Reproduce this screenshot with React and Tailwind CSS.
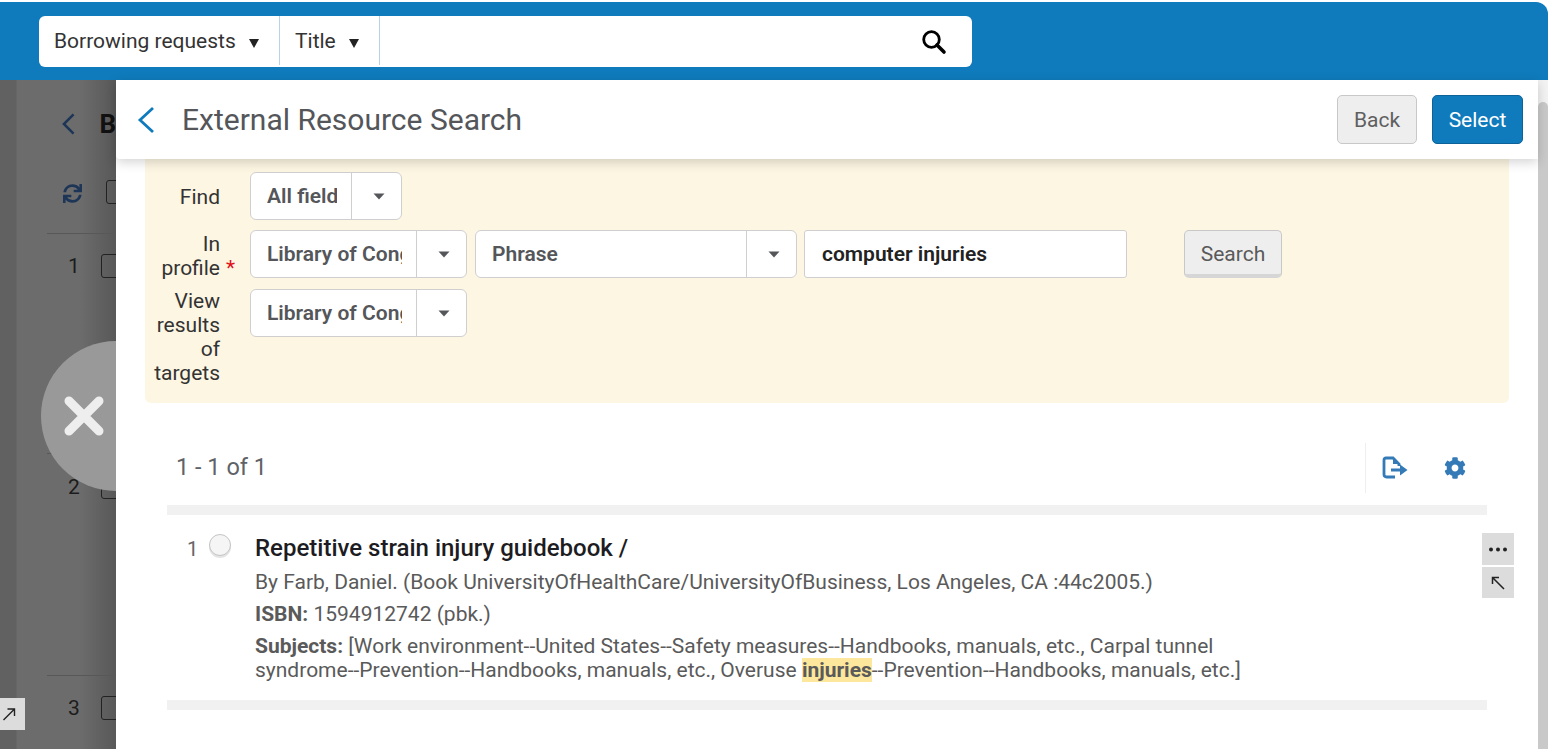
import React from 'react'
import { FaSync, FaCog } from 'react-icons/fa'

function Caret({ className }) {
    return (
        <svg width="12" height="7" viewBox="0 0 12 7" className={className}>
            <path d="M0.5 0.5 H11.5 L6 6.5 Z" fill="currentColor" />
        </svg>
    )
}

function SmallCaret() {
    return (
        <svg width="10" height="9" viewBox="0 0 10 9" className="mt-[3px] shrink-0 text-[#222222]">
            <path d="M0 0 H10 L5 9 Z" fill="currentColor" />
        </svg>
    )
}

function Dropdown({ label, width, textWidth }) {
    return (
        <div className={`flex h-[48px] rounded-[6px] border border-[#cfcfcf] bg-white ${width}`}>
            <div className="flex-1 min-w-0 pl-[16px] pt-[2px] flex items-center">
                <span className={`block overflow-hidden whitespace-nowrap text-[21px] font-semibold text-[#54565a] ${textWidth}`}>{label}</span>
            </div>
            <div className="flex w-[50px] items-center justify-center border-l border-[#cfcfcf] pl-[4px] text-[#54565a]">
                <Caret />
            </div>
        </div>
    )
}

function FormLabel({ children, className = '' }) {
    return <div className={`w-[75px] text-right text-[21px] leading-[24px] text-[#333333] ${className}`}>{children}</div>
}

function BackRow({ num, height, checkboxTop }) {
    return (
        <div className={`flex border-b border-[#585858] ${height}`}>
            <div className={`flex items-start gap-[23px] ${checkboxTop}`}>
                <span className="w-[10px] text-[21px] leading-[24px] text-[#1c1c1c]">{num}</span>
                <span className="h-[24px] w-[24px] rounded-[3px] border border-[#222222]" />
            </div>
        </div>
    )
}

function BehindPage() {
    return (
        <div className="relative w-[116px] shrink-0 overflow-hidden bg-[linear-gradient(90deg,#616161_0,#616161_16px,#6c6c6c_17px,#6c6c6c_80px,#585858_116px)]">
            <div className="pl-[47px]">
                <div className="flex h-[85px] items-center gap-[23px] pl-[14px] pt-[3px]">
                    <svg width="16" height="24" viewBox="0 0 16 24" className="text-[#1d3557]">
                        <path d="M13 2 L3 12 L13 22" fill="none" stroke="currentColor" strokeWidth="2.6" />
                    </svg>
                    <span className="text-[26px] font-bold text-[#111111]">B</span>
                </div>
                <div className="flex h-[69px] items-start gap-[24px] border-b border-[#585858] pl-[16px] pt-[15px]">
                    <FaSync className="mt-[4px] shrink-0 text-[19px] text-[#1d3557]" />
                    <span className="h-[24px] w-[24px] shrink-0 rounded-[3px] border border-[#222222]" />
                </div>
                <BackRow num="1" height="h-[220px]" checkboxTop="pt-[20px] pl-[21px]" />
                <BackRow num="2" height="h-[222px]" checkboxTop="pt-[21px] pl-[21px]" />
                <BackRow num="3" height="h-[60px] !border-b-0" checkboxTop="pt-[20px] pl-[21px]" />
            </div>
            <div className="absolute left-[41px] top-[261px] flex h-[150px] w-[150px] items-center rounded-full bg-[#999999] pl-[22px]">
                <svg width="42" height="42" viewBox="0 0 42 42">
                    <path d="M6 6 L36 36 M36 6 L6 36" stroke="#eeeeee" strokeWidth="9" strokeLinecap="round" />
                </svg>
            </div>
            <div className="absolute left-0 top-[618px] flex h-[32px] w-[25px] items-center bg-[#dcdcdc] pl-[2px]">
                <svg width="14" height="14" viewBox="0 0 14 14" className="text-[#222222]">
                    <path d="M1.5 13 L12 2.5 M5.5 2 H12.5 V9" fill="none" stroke="currentColor" strokeWidth="1.4" />
                </svg>
            </div>
        </div>
    )
}

function SearchForm() {
    return (
        <div className="mx-[29px] h-[244px] rounded-b-[6px] bg-[#fdf6e3] pt-[13px]">
            <div className="flex h-[48px] items-center gap-[30px]">
                <FormLabel className="mt-[2px]">Find</FormLabel>
                <Dropdown label="All fields" width="w-[152px]" textWidth="w-[70px]" />
            </div>
            <div className="mt-[10px] flex h-[48px] items-center">
                <div className="relative mt-[4px]">
                    <FormLabel>In profile</FormLabel>
                    <span className="absolute left-[81px] top-[24px] text-[21px] leading-[24px] text-[#e0101a]">*</span>
                </div>
                <div className="ml-[30px] flex items-center gap-[8px]">
                    <Dropdown label="Library of Congress" width="w-[217px]" textWidth="w-[135px]" />
                    <div className="mr-[-1px]">
                        <Dropdown label="Phrase" width="w-[322px]" textWidth="w-[200px]" />
                    </div>
                    <div className="flex h-[48px] w-[323px] items-center rounded-[3px] border border-[#cfcfcf] bg-white pl-[17px] pt-[2px] text-[21px] font-semibold text-[#222222]">computer injuries</div>
                </div>
                <button className="ml-[57px] h-[48px] w-[98px] rounded-[5px] border border-[#c8c8c8] border-b-[4px] border-b-[#d6d6d6] bg-[#eeeeee] pt-[4px] text-[21px] text-[#5a5a5a]">Search</button>
            </div>
            <div className="mt-[11px] flex items-start gap-[30px]">
                <FormLabel>View results of targets</FormLabel>
                <Dropdown label="Library of Congress" width="w-[217px]" textWidth="w-[135px]" />
            </div>
        </div>
    )
}

function ResultsToolbar() {
    return (
        <div className="ml-[60px] mr-[51px] mt-[40px] flex h-[50px] items-center">
            <span className="text-[23.5px] text-[#5f6368]">1 - 1 of 1</span>
            <div className="ml-auto flex h-full items-center border-l border-[#eeeeee] pl-[16px]">
                <svg width="26" height="24" viewBox="0 0 26 24" fill="none" className="text-[#337ab7]">
                    <path d="M13 21 H4.5 Q2 21 2 18.5 V4 Q2 2 4 2 H11 L17 8 V10" stroke="currentColor" strokeWidth="2.8" />
                    <path d="M11 2 V8 H17 Z" fill="currentColor" />
                    <path d="M9 12.5 H18 V8.5 L25.5 14 L18 19.5 V15.5 H9 Z" fill="currentColor" />
                </svg>
                <FaCog className="ml-[36px] mr-[21px] text-[22px] text-[#337ab7]" />
            </div>
        </div>
    )
}

function ResultItem() {
    return (
        <div className="relative ml-[51px] mr-[51px] flex h-[205px] border-y-[10px] border-[#f1f1f1] pt-[18px]">
            <span className="ml-[20px] mt-[2px] w-[10px] text-[20px] leading-[28px] text-[#666666]">1</span>
            <span className="ml-[12px] mt-[1px] h-[22px] w-[22px] rounded-full border border-[#c4c4c4] bg-[#f5f5f5] shadow-[0_2px_0_#e4e4e4]" />
            <div className="ml-[24px] w-[1010px]">
                <h3 className="text-[24px] font-medium leading-[30px] text-[#1c1c22]">Repetitive strain injury guidebook /</h3>
                <p className="mt-[7px] text-[21px] leading-[24px] text-[#5a5a5a]">By Farb, Daniel. (Book UniversityOfHealthCare/UniversityOfBusiness, Los Angeles, CA :44c2005.)</p>
                <p className="mt-[8px] text-[21px] leading-[24px] text-[#5a5a5a]"><b className="font-bold">ISBN:</b> 1594912742 (pbk.)</p>
                <p className="mt-[8px] text-[21px] leading-[24px] text-[#5a5a5a]">
                    <b className="font-bold">Subjects:</b> [Work environment--United States--Safety measures--Handbooks, manuals, etc., Carpal tunnel syndrome--Prevention--Handbooks, manuals, etc., Overuse <mark className="bg-[#fde79c] font-bold text-[#5a5a5a]">injuries</mark>--Prevention--Handbooks, manuals, etc.]
                </p>
            </div>
            <div className="absolute right-[-27px] top-[18px] flex flex-col gap-[2px]">
                <div className="flex h-[32px] w-[32px] items-center justify-center bg-[#dcdcdc]">
                    <svg width="18" height="5" viewBox="0 0 18 5"><circle cx="2" cy="2.5" r="2" fill="#222" /><circle cx="9" cy="2.5" r="2" fill="#222" /><circle cx="16" cy="2.5" r="2" fill="#222" /></svg>
                </div>
                <div className="flex h-[31px] w-[32px] items-center justify-center bg-[#dcdcdc]">
                    <svg width="16" height="16" viewBox="0 0 16 16" className="text-[#222222]">
                        <path d="M14 14 L3 3 M2.5 9 V2.5 H9" fill="none" stroke="currentColor" strokeWidth="1.5" />
                    </svg>
                </div>
            </div>
        </div>
    )
}

export default function App() {
    return (
        <div className="flex h-[749px] w-[1548px] flex-col overflow-hidden bg-white pt-[2px] font-['Roboto',sans-serif]">
            {/* top search bar */}
            <div className="h-[78px] shrink-0 rounded-tr-[12px] bg-[#0f7bbc] pl-[39px] pt-[14px]">
                <div className="flex h-[51px] w-[933px] items-center rounded-[6px] bg-white">
                    <div className="flex h-[49px] w-[241px] items-center gap-[13px] self-start border-r border-[#b9d3e6] pl-[15px] pt-[2px] text-[21px] text-[#333333]">
                        Borrowing requests <SmallCaret />
                    </div>
                    <div className="flex h-[49px] w-[100px] items-center gap-[13px] self-start border-r border-[#b9d3e6] pl-[15px] pt-[2px] text-[21px] text-[#333333]">
                        Title <SmallCaret />
                    </div>
                    <svg width="26" height="26" viewBox="0 0 26 26" fill="none" className="ml-auto mr-[25px] text-black">
                        <circle cx="10.5" cy="10.5" r="7.8" stroke="currentColor" strokeWidth="2.8" />
                        <path d="M16 16 L23 23" stroke="currentColor" strokeWidth="3.6" strokeLinecap="round" />
                    </svg>
                </div>
            </div>
            <div className="flex min-h-0 flex-1">
                <BehindPage />
                {/* side panel */}
                <div className="w-[1422px] shrink-0">
                    <div className="relative z-10 flex h-[79px] items-center rounded-bl-[4px] bg-white pl-[20px] pr-[15px] shadow-[0_3px_12px_rgba(0,0,0,0.18)]">
                        <svg width="20" height="28" viewBox="0 0 20 28" className="text-[#0f7bbc]">
                            <path d="M17 2 L4 14 L17 26" fill="none" stroke="currentColor" strokeWidth="2.8" />
                        </svg>
                        <h1 className="ml-[26px] text-[30px] text-[#54565a]">External Resource Search</h1>
                        <button className="ml-auto h-[49px] w-[80px] rounded-[5px] border border-[#c8c8c8] bg-[#eeeeee] pt-[2px] text-[21px] text-[#5f5f5f]">Back</button>
                        <button className="ml-[15px] h-[49px] w-[91px] rounded-[5px] border border-[#0c6299] bg-[#0f7bbc] pt-[2px] text-[21px] text-white">Select</button>
                    </div>
                    <SearchForm />
                    <ResultsToolbar />
                    <div className="h-[12px]" />
                    <ResultItem />
                </div>
                {/* scrollbar */}
                <div className="w-[10px] shrink-0 bg-[#f3f3f3] pt-[22px]">
                    <div className="h-full rounded-t-[5px] bg-[#c9c9c9]" />
                </div>
            </div>
        </div>
    )
}
